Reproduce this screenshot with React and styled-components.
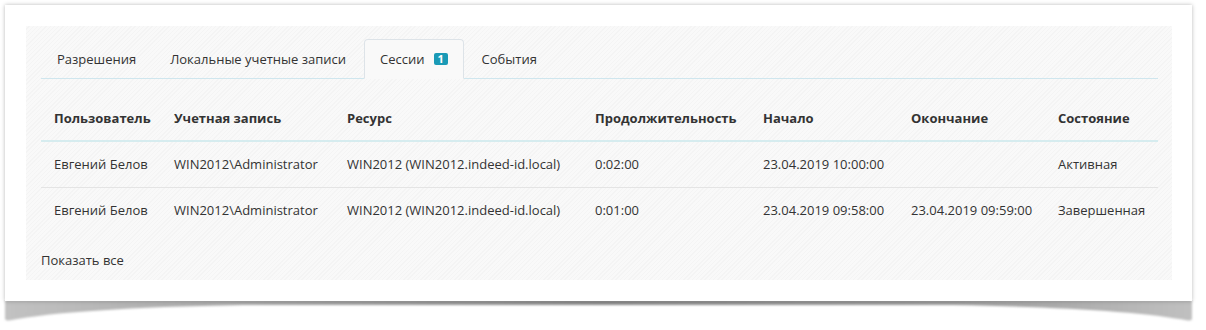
import React from 'react'
import styled, { createGlobalStyle } from 'styled-components'

const GlobalStyle = createGlobalStyle`
  html, body {
    margin: 0;
    padding: 0;
    background: #fff;
  }
  body {
    font-family: "Open Sans", "Noto Sans", "Liberation Sans", sans-serif;
    font-size: 13px;
    color: #333;
  }
  * { box-sizing: border-box; }
`

const tabs = [
  { title: 'Разрешения' },
  { title: 'Локальные учетные записи' },
  { title: 'Сессии', badge: 1, active: true },
  { title: 'События' },
]

const columns = [
  { title: 'Пользователь', width: 120 },
  { title: 'Учетная запись', width: 173 },
  { title: 'Ресурс', width: 248 },
  { title: 'Продолжительность', width: 168 },
  { title: 'Начало', width: 148 },
  { title: 'Окончание', width: 147 },
  { title: 'Состояние', width: 113 },
]

const sessions = [
  ['Евгений Белов', 'WIN2012\\Administrator', 'WIN2012 (WIN2012.indeed-id.local)', '0:02:00', '23.04.2019 10:00:00', '', 'Активная'],
  ['Евгений Белов', 'WIN2012\\Administrator', 'WIN2012 (WIN2012.indeed-id.local)', '0:01:00', '23.04.2019 09:58:00', '23.04.2019 09:59:00', 'Завершенная'],
]

// curled paper shadow under the card
function CurlShadow() {
  return (
    <ShadowSvg width="1191" height="26" viewBox="0 0 1191 26">
      <defs>
        <linearGradient id="curl" x1="0" x2="1" y1="0" y2="0">
          <stop offset="0" stopColor="#c2c2c2" />
          <stop offset="0.2" stopColor="#a8a8a8" />
          <stop offset="0.5" stopColor="#8c8c8c" />
          <stop offset="0.8" stopColor="#9c9c9c" />
          <stop offset="1" stopColor="#c0c0c0" />
        </linearGradient>
        <filter id="soft" x="-2%" y="-50%" width="104%" height="200%">
          <feGaussianBlur stdDeviation="1.2" />
        </filter>
      </defs>
      <path
        d="M2 0 H1189 V19 Q1188 21 1185 20.5 Q1120 8 950 5 L240 5 Q70 8 6 20.5 Q3 21 2 19 Z"
        fill="url(#curl)"
        filter="url(#soft)"
      />
    </ShadowSvg>
  )
}

export default function App() {
  return (
    <>
      <GlobalStyle />
      <Page>
        <Card>
          <Panel>
            <Tabs>
              {tabs.map(tab => (
                <Tab key={tab.title} active={tab.active}>
                  {tab.title}
                  {tab.badge && <Badge>{tab.badge}</Badge>}
                </Tab>
              ))}
            </Tabs>
            <Table>
              <colgroup>
                {columns.map(col => <col key={col.title} style={{ width: col.width }} />)}
              </colgroup>
              <thead>
                <tr>
                  {columns.map(col => <Th key={col.title}>{col.title}</Th>)}
                </tr>
              </thead>
              <tbody>
                {sessions.map((row, i) => (
                  <tr key={i}>
                    {row.map((cell, j) => <Td key={j} first={i === 0}>{cell}</Td>)}
                  </tr>
                ))}
              </tbody>
            </Table>
            <ShowAll href="#">Показать все</ShowAll>
          </Panel>
        </Card>
        <CurlShadow />
      </Page>
    </>
  )
}

const Page = styled.div`
  padding: 5px;
  width: 1197px;
`

const Card = styled.div`
  position: relative;
  z-index: 1;
  width: 1187px;
  padding: 21px 20px 21px 21px;
  background: #fff;
  box-shadow: 0 0 4px rgba(0, 0, 0, 0.28);
`

const ShadowSvg = styled.svg`
  display: block;
  margin: -1px 0 0 -2px;
`

const Panel = styled.div`
  padding: 13px 14px 10px 15px;
  background-color: #f9f9f9;
  background-image: repeating-linear-gradient(
    135deg,
    rgba(0, 0, 0, 0) 0 2px,
    rgba(0, 0, 0, 0.018) 2px 3px
  );
`

const Tabs = styled.ul`
  display: flex;
  margin: 0;
  padding: 0;
  list-style: none;
  border-bottom: 1px solid #cfe6ee;
`

const Tab = styled.li`
  display: flex;
  align-items: center;
  margin: 0 2px -1px 0;
  padding: 10px 15px;
  line-height: 18px;
  border: 1px solid ${p => (p.active ? '#dde3e8' : 'transparent')};
  border-bottom-color: ${p => (p.active ? '#f9f9f9' : 'transparent')};
  border-radius: 4px 4px 0 0;
  background: ${p => (p.active ? '#f9f9f9' : 'transparent')};
  color: #333;
  cursor: pointer;
  white-space: nowrap;
`

const Badge = styled.span`
  display: inline-block;
  margin-left: 9px;
  width: 14px;
  height: 12px;
  line-height: 12px;
  font-size: 11px;
  font-weight: 700;
  text-align: center;
  color: #fff;
  background: #1a9ab6;
  border-radius: 2px;
`

const Table = styled.table`
  width: 1117px;
  margin-top: 17px;
  border-collapse: collapse;
  table-layout: fixed;
`

const Th = styled.th`
  padding: 13px 13px;
  line-height: 18px;
  text-align: left;
  font-weight: 700;
  color: #333;
  white-space: nowrap;
  border-bottom: 2px solid #d6ecef;
`

const Td = styled.td`
  padding: 13px 13px;
  line-height: 19px;
  height: 46px;
  white-space: nowrap;
  border-top: ${p => (p.first ? 'none' : '1px solid #e4e4e4')};
`

const ShowAll = styled.a`
  display: block;
  margin-top: 16px;
  line-height: 20px;
  color: #333;
  text-decoration: none;
`
